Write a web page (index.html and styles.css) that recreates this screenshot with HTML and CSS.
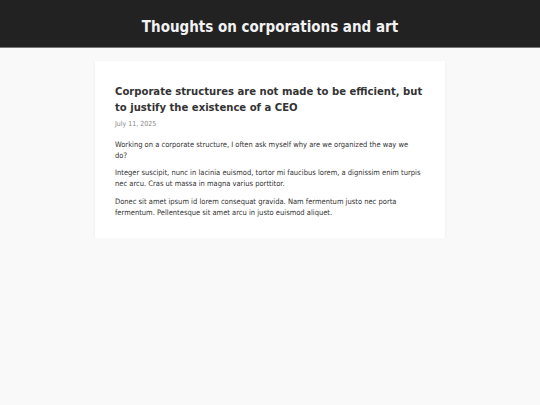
FILE: index.html
```html
<!DOCTYPE html>
<html>
<head>
<meta charset="utf-8">
<link rel="stylesheet" href="styles.css">
</head>
<body>
<header class="site-header">
  <h1 class="site-title">Thoughts on corporations and art</h1>
</header>
<main class="content">
  <article class="post">
    <h2 class="post-title">Corporate structures are not made to be efficient, but to justify the existence of a CEO</h2>
    <div class="post-date">July 11, 2025</div>
    <p>Working on a corporate structure, I often ask myself why are we organized the way we do?</p>
    <p>Integer suscipit, nunc in lacinia euismod, tortor mi faucibus lorem, a dignissim enim turpis nec arcu. Cras ut massa in magna varius porttitor.</p>
    <p>Donec sit amet ipsum id lorem consequat gravida. Nam fermentum justo nec porta fermentum. Pellentesque sit amet arcu in justo euismod aliquet.</p>
  </article>
</main>
</body>
</html>
```
FILE: styles.css
```css
html, body {
  margin: 0;
  padding: 0;
}
body {
  background: #f9f9f9;
  font-family: "DejaVu Sans Condensed", "DejaVu Sans", sans-serif;
  color: #333;
}
.site-header {
  background: #222;
  height: 41px;
  padding-top: 6px;
  border-bottom: 1px solid #777;
  display: flex;
  align-items: center;
  justify-content: center;
}
.site-title {
  margin: 0;
  color: #f2f2f2;
  font-size: 15px;
  font-weight: bold;
}
.content {
  display: flex;
  justify-content: center;
  padding-top: 13px;
}
.post {
  width: 307px;
  background: #fff;
  padding: 23px 23px 20px 20px;
  box-shadow: 0 1px 3px rgba(0,0,0,0.06);
}
.post-title {
  margin: 0 -3px 3px 0;
  font-size: 11.2px;
  line-height: 16px;
  font-weight: bold;
  color: #333;
}
.post-date {
  font-size: 7px;
  line-height: 10px;
  color: #888;
  margin-bottom: 9.5px;
}
.post p {
  font-size: 7.5px;
  line-height: 11px;
  margin: 0 0 6.5px;
}
.post p:last-child {
  margin-bottom: 0;
}
```
